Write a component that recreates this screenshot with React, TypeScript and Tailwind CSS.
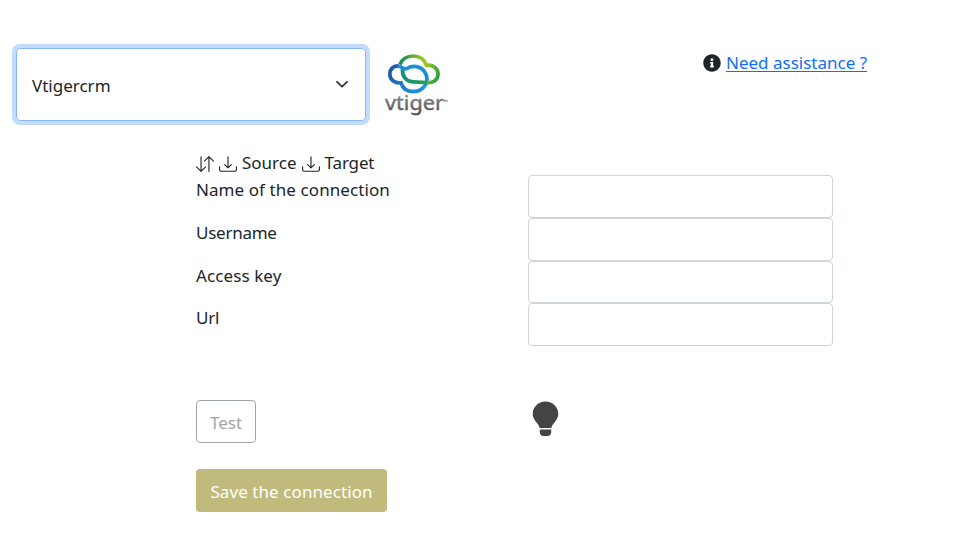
import { BsArrowDownUp, BsDownload } from 'react-icons/bs';
import { FaInfoCircle } from 'react-icons/fa';

const fields = [
  { label: 'Name of the connection', row: 'h-[43px]', spacing: 'tracking-[0.08px]' },
  { label: 'Username', row: 'h-[43px]', spacing: 'tracking-[-0.25px]' },
  { label: 'Access key', row: 'h-[42px]', spacing: 'tracking-[0.1px]' },
  { label: 'Url', row: 'h-[43px]', spacing: 'tracking-[-0.2px]' },
];

function VtigerLogo() {
  return (
    <svg className="ml-[19px] mt-[4px] h-[68px] w-[64px]" viewBox="0 0 64 68" fill="none">
      <defs>
        <linearGradient id="green" x1="14" y1="10" x2="54" y2="24" gradientUnits="userSpaceOnUse">
          <stop stopColor="#0b8a62" />
          <stop offset="0.350" stopColor="#7dbb28" />
          <stop offset="0.600" stopColor="#a0c81e" />
          <stop offset="1" stopColor="#2c9f45" />
        </linearGradient>
        <linearGradient id="blue" x1="4" y1="14" x2="44" y2="36" gradientUnits="userSpaceOnUse">
          <stop stopColor="#1c4fa0" />
          <stop offset="0.500" stopColor="#1d7fcb" />
          <stop offset="1" stopColor="#1a9ce0" />
        </linearGradient>
        <linearGradient id="link" x1="17" y1="16" x2="44" y2="30" gradientUnits="userSpaceOnUse">
          <stop stopColor="#0b8f86" />
          <stop offset="1" stopColor="#2ba14a" />
        </linearGradient>
        <linearGradient id="type" x1="0" y1="43" x2="0" y2="63" gradientUnits="userSpaceOnUse">
          <stop stopColor="#8b8b8d" />
          <stop offset="1" stopColor="#48484b" />
        </linearGradient>
      </defs>
      <path d="M13.500 14C8 13.500 4.800 17.500 4.800 22C4.800 27.500 9.500 31.500 16 30.800C17.500 36.500 22 39.600 28.500 39.600C35.500 39.600 41.800 34.500 42 27" stroke="url(#blue)" strokeWidth="3.700" />
      <path d="M15 12.500C17 7.500 22 4 28 4C34.500 4 39.500 7.200 41.300 13.300C48 12.500 53 16.500 53 22C53 28 48 31.200 41.500 30.500" stroke="url(#green)" strokeWidth="3.700" />
      <path d="M17.500 17C17 24.500 21 29.500 28 29.800C33 30 36 30.500 42 30.500" stroke="url(#link)" strokeWidth="3.700" />
      <path d="M13 14C17 14.500 18.500 18 22 16.500C25 14.600 28 14 31.500 14.600C38 15.600 42 21 42 28" stroke="#1b90d8" strokeWidth="3.700" />
      <text
        x="0"
        y="58"
        textLength="59"
        lengthAdjust="spacingAndGlyphs"
        fill="url(#type)"
        stroke="url(#type)"
        strokeWidth="0.400"
        className="font-['Noto_Sans',sans-serif] text-[19px]"
      >
        vtiger
      </text>
      <path d="M58 48.700h4.800" stroke="#99999b" strokeWidth="1.600" />
    </svg>
  );
}

export default function App() {
  return (
    <main className="h-[552px] w-[965px] overflow-hidden bg-white font-['Noto_Sans',sans-serif] text-[17px] leading-[27px] text-[#212529]">
      <header className="flex items-start pl-4 pt-12">
        <button className="flex h-[73px] w-[350px] items-center justify-between rounded-[4px] border border-[#86b7fe] pl-[15px] pr-4 text-left shadow-[0_0_0_4px_#c2dbfe]">
          <span className="pt-px">Vtigercrm</span>
          <svg className="-mt-px h-4 w-4" viewBox="0 0 16 16" fill="none" stroke="#343a40" strokeWidth="1.800" strokeLinecap="round" strokeLinejoin="round">
            <path d="m4 5.800 5 4.900 5-4.900" />
          </svg>
        </button>
        <VtigerLogo />
        <div className="ml-[254px] mt-px flex items-center gap-[5px]">
          <FaInfoCircle className="h-[18px] w-[18px]" />
          <a href="#" className="text-[#0d6efd] underline decoration-1 underline-offset-2">Need assistance ?</a>
        </div>
      </header>

      <section className="pl-[196px] pt-7">
        <div className="flex h-[26px] items-center">
          <BsArrowDownUp className="mt-[3px] h-[18px] w-[18px]" />
          <BsDownload className="ml-[5px] mt-[3px] h-[18px] w-[18px]" />
          <span className="ml-[5px]">Source</span>
          <BsDownload className="ml-[5px] mt-[3px] h-[18px] w-[18px]" />
          <span className="ml-[5px] tracking-[-0.15px]">Target</span>
        </div>
        {fields.map((field) => (
          <label key={field.label} className={`flex w-[637px] items-start justify-between ${field.row}`}>
            <span className={`pt-px ${field.spacing}`}>{field.label}</span>
            <input className="h-full w-[305px] rounded-[4px] border border-[#ced4da] outline-none" />
          </label>
        ))}
        <div className="mt-[54px] flex items-start">
          <button className="h-[43px] w-[60px] rounded-[4px] border border-[#a0a5aa] pt-[2px] text-[#a0a5aa]">Test</button>
          <svg className="ml-[276px] mt-[1px] h-[36px] w-[27px]" viewBox="0 0 27 36" fill="#444446">
            <path d="M13.500.500C6.200.500.700 6 .700 13c0 6.500 6.300 9.500 6.900 14h11.800c.600-4.500 6.900-7.500 6.900-14C26.300 6 20.800.500 13.500.500Z" />
            <path d="M7.800 28.500h11.400v2.700c0 2-1.600 3.900-3.500 3.900h-4.400c-1.900 0-3.500-1.900-3.500-3.900Z" />
          </svg>
        </div>
        <button className="mt-[26px] h-[43px] w-[191px] rounded-[4px] bg-[#c0bb7c] pt-[2px] tracking-[0.08px] text-white">Save the connection</button>
      </section>
    </main>
  );
}
